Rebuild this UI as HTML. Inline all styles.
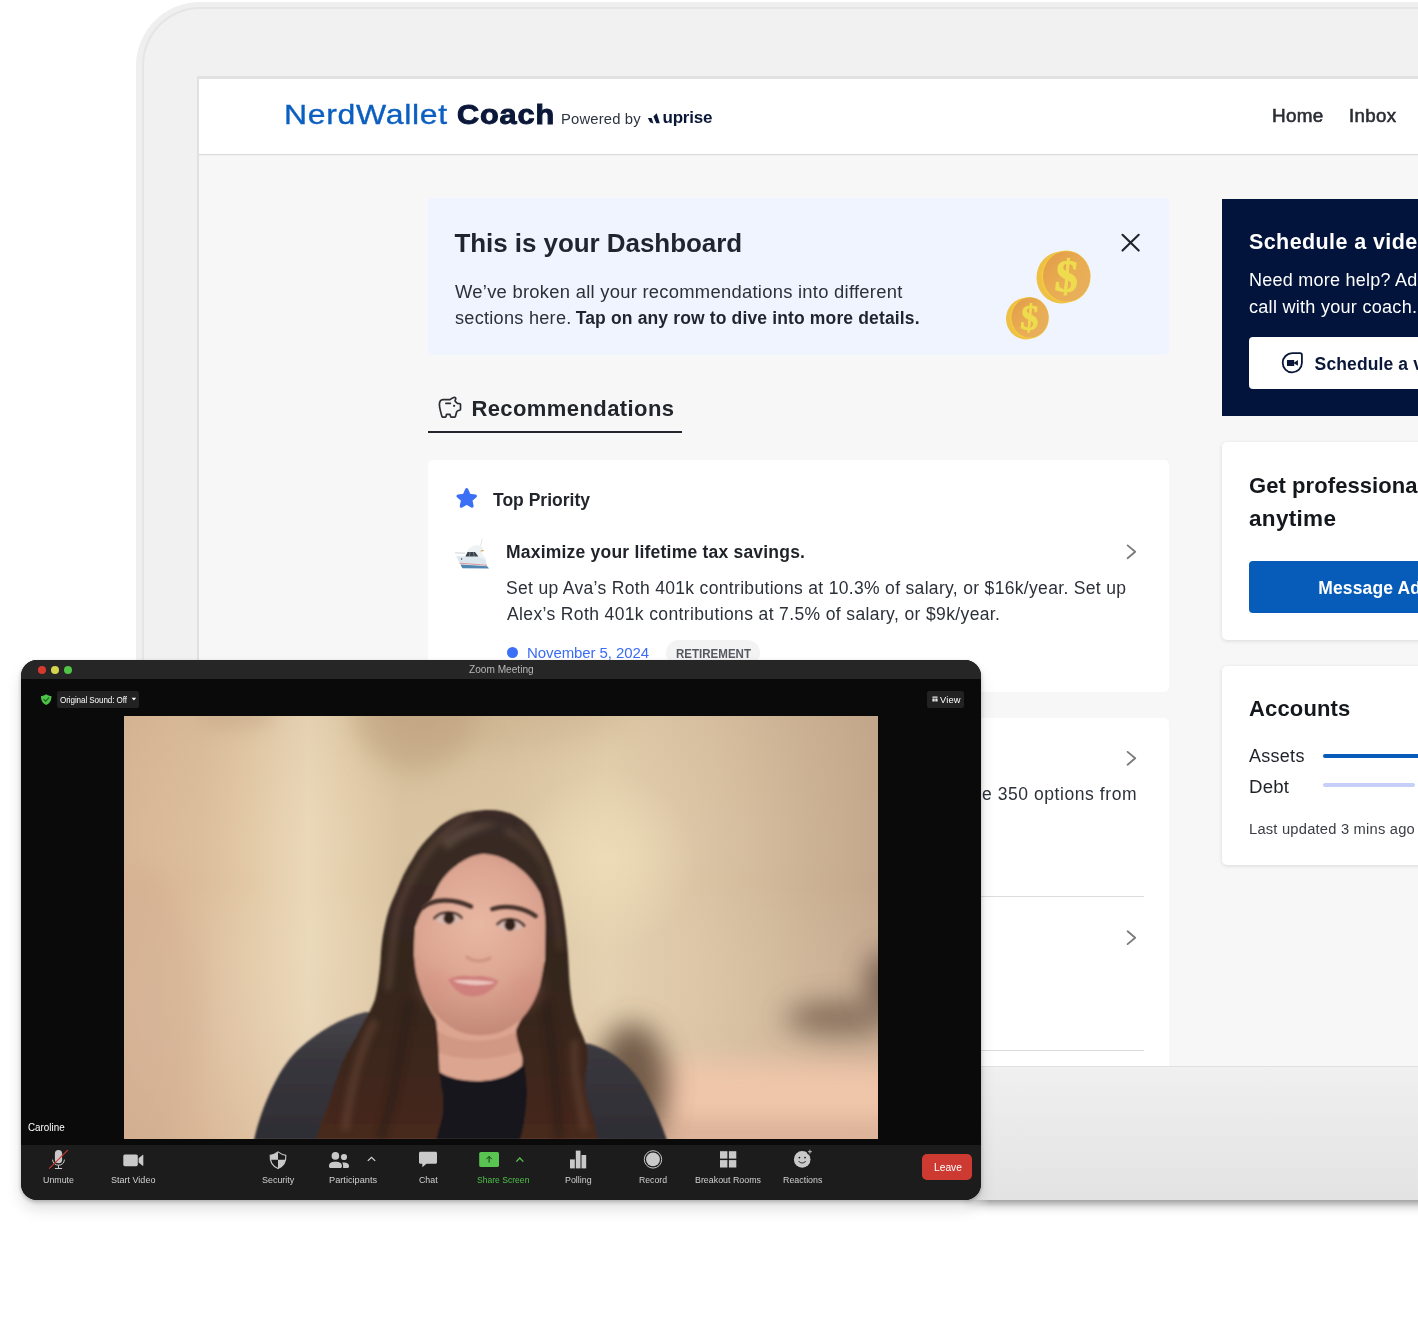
<!DOCTYPE html>
<html lang="en">
<head>
<meta charset="utf-8">
<title>NerdWallet Coach</title>
<style>
*{box-sizing:border-box;margin:0;padding:0}
html,body{width:1418px;height:1320px;overflow:hidden;background:#fff}
body{position:relative;font-family:"Liberation Sans",sans-serif}
.abs{position:absolute}
.tx{position:absolute;white-space:nowrap;line-height:1}
#laptop{position:absolute;left:136px;top:2.4px;width:1400px;height:1197.6px;border-radius:64px 0 0 0;background:#efefef}
#laptop-in{position:absolute;left:142.4px;top:7.4px;width:1400px;height:1192.6px;border-radius:58px 0 0 0;background:#e5e5e5}
#laptop-in2{position:absolute;left:144px;top:9px;width:1400px;height:1191px;border-radius:56.5px 0 0 0;background:linear-gradient(#f1f1f1 0,#f1f1f1 1057px,#efefef 1062px,#e3e3e3 1191px)}
#lapshadow{-webkit-mask-image:linear-gradient(to right,transparent,#000 28px);mask-image:linear-gradient(to right,transparent,#000 28px);position:absolute;left:962px;top:1200px;width:600px;height:16px;background:linear-gradient(rgba(0,0,0,.36),rgba(0,0,0,.26) 18%,rgba(0,0,0,.1) 45%,rgba(0,0,0,.03) 72%,rgba(0,0,0,0))}
#screen{position:absolute;left:197.3px;top:76.3px;width:1300px;height:991px;background:#e1e1e1;overflow:hidden}
#scr{position:absolute;left:1.7px;top:2.7px;width:1300px;height:987px;background:#f7f7f7;overflow:hidden}
#scr>.o{will-change:transform;position:absolute;left:-199px;top:-79px;width:1418px;height:1320px}
.card{position:absolute;background:#fff;border-radius:5px}
#zoom{position:absolute;left:21px;top:660px;width:960px;height:540px;border-radius:16px;background:#0a0a0a;overflow:hidden}
#zoom>.o{will-change:transform;position:absolute;left:-21px;top:-660px;width:1418px;height:1320px}
#zoomshadow{position:absolute;left:21px;top:660px;width:960px;height:540px;border-radius:16px;box-shadow:0 9px 15px rgba(0,0,0,.12),0 2px 4px rgba(0,0,0,.25)}
</style>
</head>
<body>
<div id="laptop"></div>
<div id="lapshadow"></div>
<div id="laptop-in"></div>
<div id="laptop-in2"></div>
<div id="screen"><div id="scr"><div class="o">
<!-- header -->
<div class="abs" style="left:199px;top:79px;width:1219px;height:74.8px;background:#fff;box-shadow:0 1.2px 0 #d9dbdb"></div>
<svg class="abs" style="left:646px;top:111px" width="16" height="14" viewBox="646 111 16 14"><path d="M647.9 118 L651.7 118 L653.4 123.4 L650 122.2 Z M656.7 113.2 L653.4 116.4 L656.3 123.2 L659.8 123.2 Z" fill="#0a1738"/></svg>

<!-- banner -->
<div class="abs" style="left:427.7px;top:198.4px;width:741.6px;height:157px;background:#f0f4fe;border-radius:3px"></div>
<svg class="abs" style="left:1000px;top:230px" width="150" height="115" viewBox="1000 230 150 115">
<defs>
<linearGradient id="cg" x1="0" y1="0" x2="1" y2="1"><stop offset="0" stop-color="#e29a48"/><stop offset=".5" stop-color="#e8ac52"/><stop offset="1" stop-color="#e8b060"/></linearGradient>
</defs>
<ellipse cx="1061.5" cy="277.5" rx="25" ry="26" fill="#efc046"/>
<ellipse cx="1066" cy="276.6" rx="24.6" ry="26" fill="#f2cb3e"/>
<ellipse cx="1066.6" cy="276.4" rx="23.6" ry="25.2" fill="url(#cg)"/>
<text x="1066.8" y="291.5" font-family="'Liberation Serif',serif" font-weight="700" font-size="46" fill="#efdc4e" stroke="#efdc4e" stroke-width=".9" text-anchor="middle" transform="rotate(5 1066 276)">$</text>
<ellipse cx="1025.8" cy="318.6" rx="19.8" ry="20.8" fill="#efc046"/>
<ellipse cx="1029.4" cy="317.8" rx="19.4" ry="20.8" fill="#f2cb3e"/>
<ellipse cx="1030" cy="317.6" rx="18.5" ry="20" fill="url(#cg)"/>
<text x="1029.8" y="329.6" font-family="'Liberation Serif',serif" font-weight="700" font-size="36" fill="#efdc4e" stroke="#efdc4e" stroke-width=".7" text-anchor="middle" transform="rotate(5 1030 318)">$</text>
<path d="M1122.5 234.8 L1138.7 250.6 M1138.7 234.8 L1122.5 250.6" stroke="#1f2228" stroke-width="2.1" stroke-linecap="round" fill="none"/>
</svg>

<!-- recommendations -->
<div class="abs" style="left:428px;top:431.3px;width:254px;height:2px;background:#23262c"></div>
<div class="card" style="left:427.7px;top:460px;width:741.7px;height:231.5px"></div>
<div class="card" style="left:427.7px;top:718.4px;width:741.7px;height:400px"></div>
<div class="abs" style="left:455px;top:896px;width:689px;height:1px;background:#dcdcdc"></div>
<div class="abs" style="left:455px;top:1050px;width:689px;height:1px;background:#dcdcdc"></div>
<svg class="abs" style="left:436px;top:394px" width="28" height="26" viewBox="436 394 28 26"><g fill="none" stroke="#2a2d33" stroke-width="1.7" stroke-linejoin="round" stroke-linecap="round">
<path d="M443 399.6 L450 399.6 C451.5 398.4 453 397.4 454.4 397.3 C455.6 397.3 455.9 398.2 455.7 399 C455.5 399.8 455.2 400.3 455 400.9 C455.8 402 456.6 402.8 457.6 403.4 L459.6 403.6 C460.2 403.6 460.5 404 460.5 404.5 L460.5 409.2 C460.5 409.8 460.1 410.1 459.6 410.2 L457.8 410.7 C457.2 411 456.9 411.3 456.7 411.8 L455.4 416.4 C455.2 417 454.9 417.2 454.3 417.2 L451.6 417.2 C451 417.2 450.8 417 450.6 416.4 L450 414.4 L446.5 414.4 L446 416.4 C445.8 417 445.5 417.2 445 417.2 L443 417.2 C442.4 417.2 442.1 417 441.9 416.4 L440.6 411.6 C439.8 408.6 439.3 406.4 439.4 404.2 C439.5 401.4 441 399.8 443 399.6 Z"/>
<path d="M445.9 403.3 L450.4 403.3"/></g><circle cx="454.1" cy="405.8" r="1.1" fill="#2a2d33"/></svg>
<svg class="abs" style="left:454px;top:485px" width="26" height="26" viewBox="454 485 26 26"><path d="M466.70 489.70 L469.23 495.32 L475.35 495.99 L470.79 500.13 L472.05 506.16 L466.70 503.10 L461.35 506.16 L462.61 500.13 L458.05 495.99 L464.17 495.32 Z" fill="#3b6ff6" stroke="#3b6ff6" stroke-width="3.2" stroke-linejoin="round"/></svg>
<svg class="abs" style="left:452px;top:536px" width="40" height="36" viewBox="452 536 40 36">
<path d="M480.6 546 L482.2 538.5" stroke="#cfd4d8" stroke-width=".6" fill="none"/>
<path d="M455 552.8 L465 553.2" stroke="#d8dde0" stroke-width="1.2" fill="none"/>
<path d="M456.3 556.3 L485 557.5 L487 566.6 L461.8 566.8 Z" fill="#e3ebf0"/>
<path d="M460.5 564.6 L487.2 566.3 L489 568.4 L462.3 568.2 Z" fill="#4f86b2"/>

<path d="M456.3 556.3 L485 557.5 L487 565.6 L460.2 564 Z" fill="#dde7ee"/><path d="M459.6 563.2 L487 565.3" stroke="#d8767c" stroke-width=".7" fill="none"/>
<path d="M464.6 557 L467.6 550.4 C469.5 547.2 472.6 545.8 476 545.3 L479 545.2 C481 546 482.6 547.4 483.8 549 L480.8 551 L486 560.5 L479 557 Z" fill="#eef2f4"/>
<path d="M465.4 556.4 L467.6 552 L475 552 L478.4 556.6 Z" fill="#39404a"/><path d="M470 552 L469.4 556.5 M473.4 552 L474.2 556.6" stroke="#aeb8c0" stroke-width=".5" fill="none"/>
<path d="M480.5 550.6 L483.6 550.2 L483.8 551 L481 551.4 Z" fill="#b8901c"/>
<circle cx="461.6" cy="559" r=".7" fill="#39414a"/>
</svg>
<svg class="abs" style="left:1122px;top:540px" width="20" height="410" viewBox="1122 540 20 410"><g fill="none" stroke="#7a7a7a" stroke-width="1.8" stroke-linecap="round" stroke-linejoin="round">
<path d="M1127.6 545.4 L1135.2 551.8 L1127.6 558.2"/><path d="M1127.6 751.9 L1135.2 758.3 L1127.6 764.7"/><path d="M1127.6 931.3 L1135.2 937.7 L1127.6 944.1"/></g></svg>
<div class="abs" style="left:507px;top:646.5px;width:11px;height:11px;border-radius:50%;background:#3b6ff6"></div>
<div class="abs" style="left:666px;top:640px;width:94px;height:26px;border-radius:13px;background:#f3f3f3"></div>

<!-- sidebar -->
<div class="abs" style="left:1222.4px;top:198.5px;width:300px;height:217.3px;background:#02143b"></div>
<div class="abs" style="left:1249px;top:337px;width:300px;height:52px;background:#fff;border-radius:4px"></div>
<div class="card" style="left:1222.4px;top:441.8px;width:300px;height:198.4px;box-shadow:0 1px 4px rgba(0,0,0,.12)"></div>
<div class="abs" style="left:1249px;top:560.8px;width:300px;height:52.2px;background:#065cb8;border-radius:4px"></div>
<div class="card" style="left:1222.4px;top:665.8px;width:300px;height:199.6px;box-shadow:0 1px 4px rgba(0,0,0,.12)"></div>
<div class="abs" style="left:1323px;top:754px;width:200px;height:4px;background:#065cb8;border-radius:2px"></div>
<div class="abs" style="left:1323px;top:783px;width:92px;height:4px;background:#c5cff8;border-radius:2px"></div>
<svg class="abs" style="left:1279px;top:350px" width="26" height="26" viewBox="1279 350 26 26"><path d="M1292.3 353.2 L1300 353.2 C1301.2 353.2 1301.9 353.9 1301.9 355.1 L1301.9 363 A9.6 9.6 0 1 1 1292.3 353.2 Z" fill="none" stroke="#0a1738" stroke-width="1.8"/><path d="M1287 360 L1294.2 360 L1294.2 362.4 L1297.9 360.1 L1297.9 365.8 L1294.2 363.5 L1294.2 365.9 L1287 365.9 Z" fill="#0a1738"/></svg>

<span class="tx" style="left:284.2px;top:101.0px;font-size:28px;font-weight:400;color:#0b5fc0;-webkit-text-stroke:0.35px #0b5fc0;letter-spacing:0.6px;transform-origin:0 0;transform:scaleX(1.1418);">NerdWallet</span>
<span class="tx" style="left:457.4px;top:101.0px;font-size:28px;font-weight:700;color:#0a1738;-webkit-text-stroke:1px #0a1738;letter-spacing:0.8px;transform-origin:0 0;transform:scaleX(1.0940);">Coach</span>
<span class="tx" style="left:561.0px;top:112.0px;font-size:14px;font-weight:400;color:#2c3340;letter-spacing:0.15px;transform-origin:0 0;transform:scaleX(1.0572);">Powered by</span>
<span class="tx" style="left:662.5px;top:109.0px;font-size:17px;font-weight:700;color:#0a1738;letter-spacing:-0.206px;">uprise</span>
<span class="tx" style="left:1271.6px;top:108.0px;font-size:17.5px;font-weight:400;color:#2a2d33;-webkit-text-stroke:0.55px #2a2d33;letter-spacing:0.3px;transform-origin:0 0;transform:scaleX(1.0796);">Home</span>
<span class="tx" style="left:1349.0px;top:108.0px;font-size:17.5px;font-weight:400;color:#2a2d33;-webkit-text-stroke:0.55px #2a2d33;letter-spacing:0.3px;transform-origin:0 0;transform:scaleX(1.0674);">Inbox</span>
<span class="tx" style="left:454.4px;top:230.0px;font-size:26px;font-weight:700;color:#1f2430;letter-spacing:-0.055px;">This is your Dashboard</span>
<span class="tx" style="left:454.7px;top:284.0px;font-size:17.5px;font-weight:400;color:#2c3038;letter-spacing:0.25px;transform-origin:0 0;transform:scaleX(1.0512);">We’ve broken all your recommendations into different</span>
<span class="tx" style="left:454.7px;top:310.0px;font-size:17.5px;font-weight:400;color:#2c3038;letter-spacing:0.25px;transform-origin:0 0;transform:scaleX(1.0364);">sections here.</span>
<span class="tx" style="left:575.7px;top:310.0px;font-size:17.5px;font-weight:700;color:#1f2430;letter-spacing:0.146px;">Tap on any row to dive into more details.</span>
<span class="tx" style="left:471.4px;top:398.0px;font-size:22px;font-weight:700;color:#22252b;letter-spacing:0.412px;">Recommendations</span>
<span class="tx" style="left:493.0px;top:492.0px;font-size:17.5px;font-weight:700;color:#22252b;letter-spacing:0.009px;">Top Priority</span>
<span class="tx" style="left:506.0px;top:544.0px;font-size:17.5px;font-weight:700;color:#1f2228;letter-spacing:0.212px;">Maximize your lifetime tax savings.</span>
<span class="tx" style="left:506.0px;top:580.0px;font-size:17.5px;font-weight:400;color:#2c3038;letter-spacing:0.324px;">Set up Ava’s Roth 401k contributions at 10.3% of salary, or $16k/year. Set up</span>
<span class="tx" style="left:507.0px;top:606.0px;font-size:17.5px;font-weight:400;color:#2c3038;letter-spacing:0.374px;">Alex’s Roth 401k contributions at 7.5% of salary, or $9k/year.</span>
<span class="tx" style="left:527.0px;top:645.0px;font-size:15px;font-weight:400;color:#3b6cf6;letter-spacing:-0.094px;">November 5, 2024</span>
<span class="tx" style="left:676.0px;top:648.0px;font-size:12px;font-weight:700;color:#565960;letter-spacing:0.0px;transform-origin:0 0;transform:scaleX(0.9615);">RETIREMENT</span>
<span class="tx" style="left:982.0px;top:786.0px;font-size:17.5px;font-weight:400;color:#2c3038;letter-spacing:0.562px;">e 350 options from</span>
<span class="tx" style="left:934.0px;top:786.0px;font-size:17.5px;font-weight:400;color:#2c3038;letter-spacing:-0.748px;">Choos</span>
<span class="tx" style="left:1249.0px;top:232.0px;font-size:21.5px;font-weight:700;color:#ffffff;letter-spacing:0.406px;">Schedule a video call</span>
<span class="tx" style="left:1249.0px;top:272.0px;font-size:17.5px;font-weight:400;color:#ffffff;letter-spacing:0.25px;transform-origin:0 0;transform:scaleX(1.0276);">Need more help? Add a video</span>
<span class="tx" style="left:1249.0px;top:299.0px;font-size:17.5px;font-weight:400;color:#ffffff;letter-spacing:0.25px;transform-origin:0 0;transform:scaleX(1.0333);">call with your coach.</span>
<span class="tx" style="left:1314.6px;top:356.0px;font-size:17.5px;font-weight:700;color:#0a1738;letter-spacing:0.122px;">Schedule a video call</span>
<span class="tx" style="left:1249.0px;top:475.0px;font-size:22px;font-weight:700;color:#14171c;letter-spacing:0.074px;">Get professional help</span>
<span class="tx" style="left:1249.0px;top:508.0px;font-size:22px;font-weight:700;color:#14171c;letter-spacing:0.3px;transform-origin:0 0;transform:scaleX(1.0240);">anytime</span>
<span class="tx" style="left:1318.3px;top:580.0px;font-size:17.5px;font-weight:700;color:#ffffff;letter-spacing:0.122px;">Message Advisor</span>
<span class="tx" style="left:1249.0px;top:698.0px;font-size:22px;font-weight:700;color:#14171c;letter-spacing:0.150px;">Accounts</span>
<span class="tx" style="left:1249.0px;top:747.0px;font-size:18px;font-weight:400;color:#1f2228;letter-spacing:0.274px;">Assets</span>
<span class="tx" style="left:1249.0px;top:778.0px;font-size:18px;font-weight:400;color:#1f2228;letter-spacing:0.2px;transform-origin:0 0;transform:scaleX(1.0352);">Debt</span>
<span class="tx" style="left:1249.0px;top:822.0px;font-size:14px;font-weight:400;color:#3a3d44;letter-spacing:0.2px;transform-origin:0 0;transform:scaleX(1.0510);">Last updated 3 mins ago</span>
</div></div></div>
<div id="zoomshadow"></div>
<div id="zoom"><div class="o">
<div class="abs" style="left:21px;top:660px;width:960px;height:19px;background:#262626"></div>
<div class="abs" style="left:21px;top:1145px;width:960px;height:55px;background:#1c1c1c"></div>
<svg class="abs" style="left:124px;top:716px" width="754" height="423" viewBox="124 716 754 423">
<defs>
<linearGradient id="bgh" x1="124" x2="878" y1="0" y2="0" gradientUnits="userSpaceOnUse">
<stop offset="0" stop-color="#d7b695"/><stop offset=".1" stop-color="#dcbd9b"/><stop offset=".17" stop-color="#e3caa7"/><stop offset=".245" stop-color="#ead8b8"/><stop offset=".3" stop-color="#e4cfac"/><stop offset=".37" stop-color="#d9c3a0"/><stop offset=".5" stop-color="#dac5a2"/><stop offset=".64" stop-color="#e3d0ad"/><stop offset=".78" stop-color="#d9c2a2"/><stop offset=".9" stop-color="#cdb395"/><stop offset="1" stop-color="#c3a78c"/>
</linearGradient>
<linearGradient id="bgv" x1="0" x2="0" y1="716" y2="1139" gradientUnits="userSpaceOnUse">
<stop offset="0" stop-color="#b89a7c" stop-opacity=".12"/><stop offset=".18" stop-color="#c8ac8c" stop-opacity=".04"/><stop offset=".4" stop-color="#fff" stop-opacity="0"/><stop offset="1" stop-color="#d0a68c" stop-opacity=".25"/>
</linearGradient>
<radialGradient id="spot" cx="606" cy="860" r="90" gradientUnits="userSpaceOnUse"><stop offset="0" stop-color="#eedcb8" stop-opacity=".95"/><stop offset="1" stop-color="#eedcb8" stop-opacity="0"/></radialGradient>
<radialGradient id="face" cx="478" cy="925" r="108" gradientUnits="userSpaceOnUse"><stop offset="0" stop-color="#e8b8a2"/><stop offset=".55" stop-color="#dca592"/><stop offset="1" stop-color="#c58a78"/></radialGradient>
<linearGradient id="hair" x1="0" x2="0" y1="810" y2="1139" gradientUnits="userSpaceOnUse"><stop offset="0" stop-color="#3a2c26"/><stop offset=".5" stop-color="#35251e"/><stop offset=".8" stop-color="#3e281e"/><stop offset="1" stop-color="#48291c"/></linearGradient>
<linearGradient id="shirt" x1="0" x2="0" y1="1012" y2="1139" gradientUnits="userSpaceOnUse"><stop offset="0" stop-color="#48464c"/><stop offset=".35" stop-color="#38373d"/><stop offset="1" stop-color="#2e2d34"/></linearGradient>
<filter id="bl1" filterUnits="userSpaceOnUse" x="100" y="700" width="800" height="460"><feGaussianBlur stdDeviation="1"/></filter>
<filter id="bl3" filterUnits="userSpaceOnUse" x="100" y="700" width="800" height="460"><feGaussianBlur stdDeviation="3"/></filter>
<filter id="bl8" filterUnits="userSpaceOnUse" x="100" y="700" width="800" height="460"><feGaussianBlur stdDeviation="9"/></filter>
<filter id="bl14" filterUnits="userSpaceOnUse" x="100" y="700" width="800" height="460"><feGaussianBlur stdDeviation="14"/></filter>
</defs>
<rect x="124" y="716" width="754" height="423" fill="url(#bgh)"/>
<rect x="124" y="716" width="754" height="423" fill="url(#bgv)"/>
<rect x="124" y="716" width="754" height="423" fill="url(#spot)"/>
<ellipse cx="415" cy="710" rx="62" ry="62" fill="#b89a76" filter="url(#bl14)" opacity=".5"/><ellipse cx="500" cy="712" rx="130" ry="36" fill="#bfa07e" filter="url(#bl14)" opacity=".28"/><ellipse cx="235" cy="716" rx="40" ry="14" fill="#c4a686" filter="url(#bl8)" opacity=".5"/>
<!-- pink floor bottom right -->
<rect x="640" y="1062" width="260" height="100" fill="#f0c6aa" filter="url(#bl14)"/>
<rect x="600" y="1118" width="300" height="40" fill="#d9b096" filter="url(#bl8)" opacity=".8"/>
<!-- dark blobs -->
<ellipse cx="632" cy="1085" rx="36" ry="62" fill="#5e4838" filter="url(#bl14)" opacity=".85"/>
<ellipse cx="835" cy="1018" rx="50" ry="16" fill="#6e5a4a" filter="url(#bl14)" opacity=".8"/>
<ellipse cx="884" cy="985" rx="18" ry="34" fill="#5e4a3c" filter="url(#bl14)" opacity=".8"/>
<!-- left soft shade -->
<ellipse cx="140" cy="1020" rx="60" ry="150" fill="#cfa88c" filter="url(#bl14)" opacity=".35"/>
<ellipse cx="400" cy="1035" rx="18" ry="22" fill="#c9ac8c" filter="url(#bl8)" opacity=".6"/>
<!-- shirt -->
<g filter="url(#bl1)">
<path d="M254 1140 C262 1105 280 1065 300 1048 C318 1032 340 1018 366 1012 L590 1044 C612 1050 632 1066 644 1088 C656 1110 662 1126 667 1140 Z" fill="url(#shirt)"/>
<path d="M416 1140 L426 1064 L528 1064 L540 1140 Z" fill="#19181d"/>
<!-- neck -->
<path d="M430 1010 L432 1066 C450 1086 502 1086 522 1066 L526 1010 Z" fill="#dca590"/>
<path d="M430 1026 C455 1046 498 1046 526 1026 L526 1048 C498 1062 452 1062 430 1048 Z" fill="#c98f7c" opacity=".6"/>
<!-- hair -->
<path d="M480.5 810.5 C494 809 506 811 514.4 815.3 C525 821 532 828 537 836.4 C546 850 551 862 553.9 873 C559 888 562 902 563.8 915.4 C566 930 567 942 568 955 C569 968 569 982 570.8 994.4 C572 1006 575 1018 579.3 1028 C583 1036 586 1043 587.7 1050.8 C589 1062 585 1072 585 1084.6 C585 1096 590 1108 593.4 1118.5 L598 1140 L520 1140 C528 1112 529 1085 523 1060 C520 1048 516 1040 516 1030 C520 1020 526 1012 531 1003 L545 960 L540 893 L514 864 L483 854 L458 864 L432 898 L415 927 L414 955 L420 986 C424 1000 430 1010 436 1020 C440 1050 438 1070 442 1090 C446 1110 440 1125 436 1140 L316 1140 C320 1125 324 1115 328 1104.4 C333 1090 337 1076 342.3 1062 C348 1050 355 1040 360.6 1028 C366 1018 371 1010 374.8 1000 C378 988 379 976 380.4 963.4 C381 950 382 938 384.6 926.7 C387 914 391 903 396 892.8 C401 880 406 869 412.8 859 C418 849 425 841 432.6 833.6 C439 826 447 821 455 816.7 C463 813 472 811 480.5 810.5 Z" fill="url(#hair)"/>
<!-- face -->
<path d="M432.6 898.5 C438 884 446 872 458 864.6 C466 858 475 854.5 483.4 854 C494 854 505 858 514.4 864.6 C526 872 534 882 539.8 892.8 C544 903 545.4 915 545.4 926.7 L544.9 955 C544 966 542 976 539.8 986 C536 997 532 1006 525.7 1014 C519 1022 511 1027 503 1031 C496 1034 488 1035.3 480.5 1035.3 C473 1035.3 465 1034 458 1031 C450 1027 442 1021 435.4 1014 C428 1006 423 996 419.9 986 C416 976 414.5 966 414.2 955 C414 945 414.5 936 415.7 926.7 C418 916 424 907 432.6 898.5 Z" fill="url(#face)"/>
</g>
<!-- hair highlights -->
<g filter="url(#bl3)" opacity=".6"><path d="M440 842 C455 826 478 820 500 824 C485 828 462 836 448 850 Z" fill="#6a5648"/><path d="M505 826 C522 832 536 848 542 866 C532 852 520 840 505 834 Z" fill="#5e4a3e"/></g>
<g filter="url(#bl3)" opacity=".55">
<path d="M470 815 C440 830 415 865 400 905 C392 930 392 960 388 990" stroke="#6a5040" stroke-width="6" fill="none"/>
<path d="M520 825 C545 850 556 900 560 950" stroke="#5a4436" stroke-width="5" fill="none"/>
<path d="M375 1020 C360 1050 350 1090 345 1130" stroke="#6a4a38" stroke-width="8" fill="none"/>
<path d="M575 1040 C572 1070 580 1100 585 1130" stroke="#6a4a38" stroke-width="7" fill="none"/>
<path d="M410 1000 C400 1050 395 1100 380 1138" stroke="#2a1c16" stroke-width="10" fill="none"/>
<path d="M545 1000 C555 1050 555 1100 560 1138" stroke="#2a1c16" stroke-width="10" fill="none"/>
</g>
<!-- features -->
<g filter="url(#bl1)">
<path d="M423 907 C433 899.5 452 897.5 471 906.5" stroke="#45302a" stroke-width="4.4" fill="none" stroke-linecap="round"/>
<path d="M492.5 909 C506 904.5 524 907.5 535.5 916" stroke="#45302a" stroke-width="4.4" fill="none" stroke-linecap="round"/>
<ellipse cx="447.8" cy="918.5" rx="12.5" ry="5.6" fill="#d9bab0"/>
<ellipse cx="510.5" cy="925" rx="12.5" ry="5.6" fill="#d9bab0"/>
<circle cx="449" cy="918.4" r="5.6" fill="#33201a"/>
<circle cx="510" cy="925" r="5.6" fill="#33201a"/>
<path d="M434 919 C440 910.5 456 910.5 462 918.5" stroke="#2a1a16" stroke-width="2.2" fill="none"/>
<path d="M497 925 C503 917 518 917.5 524.5 926.5" stroke="#2a1a16" stroke-width="2.2" fill="none"/>
<path d="M467 957 C472 962 484 962 490 958" stroke="#c98e7c" stroke-width="3.5" fill="none" stroke-linecap="round" opacity=".7"/>
<path d="M448 979.5 C458 974.5 466 975.5 472 976.5 C480 975 490 976.5 498.5 981 C493 992 481 997 472 996.5 C461 996 453 989 448 979.5 Z" fill="#cf807c"/>
<path d="M453 980.5 C466 979.5 484 980.5 495 982.5 C487 986 462 986 453 980.5 Z" fill="#ecc6c0"/>
</g>
<g filter="url(#bl8)" opacity=".5">
<ellipse cx="436" cy="985" rx="12" ry="14" fill="#d88c80"/>
<ellipse cx="524" cy="990" rx="12" ry="14" fill="#d88c80"/>
</g>
</svg>

<!-- traffic lights -->
<div class="abs" style="left:38px;top:665.7px;width:8.2px;height:8.2px;border-radius:50%;background:#d8392f"></div>
<div class="abs" style="left:50.8px;top:665.7px;width:8.2px;height:8.2px;border-radius:50%;background:#d6d44c"></div>
<div class="abs" style="left:63.7px;top:665.7px;width:8.2px;height:8.2px;border-radius:50%;background:#4fc446"></div>
<!-- top bar buttons -->
<div class="abs" style="left:57px;top:691px;width:82px;height:16.5px;border-radius:2.5px;background:#222"></div>
<div class="abs" style="left:927px;top:691px;width:37px;height:16.5px;border-radius:2.5px;background:#222"></div>
<svg class="abs" style="left:39px;top:692px" width="14" height="14" viewBox="39 692 14 14"><path d="M46.2 694.2 C47.8 695.4 49.6 695.9 51.4 696 C51.5 700.2 50 703.2 46.2 705 C42.4 703.2 40.9 700.2 41 696 C42.8 695.9 44.6 695.4 46.2 694.2 Z" fill="#4fc24a"/><path d="M43.8 699.4 L45.6 701.2 L48.8 697.9" stroke="#1d6a1f" stroke-width="1.3" fill="none" stroke-linecap="round" stroke-linejoin="round"/></svg>
<svg class="abs" style="left:130px;top:696px" width="8" height="6" viewBox="130 696 8 6"><path d="M131.6 697.8 L136.2 697.8 L133.9 700.4 Z" fill="#fff"/></svg>
<svg class="abs" style="left:931px;top:695px" width="8" height="8" viewBox="931 695 8 8"><path d="M932.4 696.4 H937.6 V697.8 H932.4 Z M932.4 698.5 H934.7 V701.4 H932.4 Z M935.3 698.5 H937.6 V701.4 H935.3 Z" fill="#e8e8e8"/></svg>
<!-- toolbar icons -->
<svg class="abs" style="left:40px;top:1147px" width="800" height="26" viewBox="40 1147 800 26">
<g fill="#c9c9c9">
<!-- mic -->
<rect x="54.9" y="1150.1" width="7.2" height="13.2" rx="3.6"/>
<path d="M52.6 1159.6 C52.6 1167 64.4 1167 64.4 1159.6" fill="none" stroke="#c9c9c9" stroke-width="1"/>
<path d="M58.5 1165.2 V1168.4 M54.9 1168.5 H62.1" fill="none" stroke="#c9c9c9" stroke-width="1"/>
<path d="M67.8 1150.1 L49.1 1168.7" stroke="#d0382e" stroke-width="1.1" fill="none"/>
<!-- video -->
<rect x="123.3" y="1154.4" width="14.5" height="11.8" rx="1.6"/>
<path d="M138.6 1158.3 L142.6 1154.9 C143 1154.6 143.3 1154.8 143.3 1155.2 V1165.4 C143.3 1165.8 143 1166 142.6 1165.7 L138.6 1162.6 Z"/>
<!-- security -->
<path d="M278 1151.9 C280.6 1153.9 283.4 1154.9 285.8 1155.2 C286.3 1161.4 283.6 1166 278 1168.6 C272.4 1166 269.7 1161.4 270.2 1155.2 C272.6 1154.9 275.4 1153.9 278 1151.9 Z" fill="none" stroke="#c9c9c9" stroke-width="1.1"/>
<path d="M278 1151.9 C275.4 1153.9 272.6 1154.9 270.2 1155.2 C270.1 1156.8 270.2 1158.4 270.5 1159.8 H278 Z"/>
<path d="M278 1159.8 H285.5 C284.7 1163.8 282.2 1166.7 278 1168.6 Z"/>
<!-- participants -->
<circle cx="335.4" cy="1155.9" r="3.8"/>
<path d="M330.6 1167.9 C329.6 1167.9 329 1167.3 329 1166.4 V1165.6 C329 1163.2 331.4 1161.7 335.4 1161.7 C339.4 1161.7 341.9 1163.2 341.9 1165.6 V1166.4 C341.9 1167.3 341.3 1167.9 340.3 1167.9 Z"/>
<circle cx="344" cy="1157" r="3.1"/>
<path d="M343.1 1167.9 V1165.4 C343.1 1164.3 342.7 1163.4 342 1162.8 C342.6 1162.6 343.3 1162.5 344 1162.5 C347.2 1162.5 349 1163.8 349 1165.8 V1166.5 C349 1167.4 348.5 1167.9 347.6 1167.9 Z"/>
<path d="M367.8 1160.9 L371.5 1157.3 L375.2 1160.9" fill="none" stroke="#d0d0d0" stroke-width="1.3"/>
<!-- chat -->
<path d="M420.5 1151.7 H435.5 C436.4 1151.7 437 1152.3 437 1153.2 V1162.3 C437 1163.2 436.4 1163.8 435.5 1163.8 H426.4 L422.4 1167.2 L422.2 1163.8 H420.5 C419.6 1163.8 419 1163.2 419 1162.3 V1153.2 C419 1152.3 419.6 1151.7 420.5 1151.7 Z"/>
<!-- share -->
<rect x="479.2" y="1152" width="19.8" height="14.9" rx="1.6" fill="#5ac453"/>
<path d="M489.1 1162.6 V1156.6 M486.4 1159.2 L489.1 1156.4 L491.8 1159.2" fill="none" stroke="#163a16" stroke-width="1"/>
<path d="M516.3 1161.6 L519.8 1158 L523.3 1161.6" fill="none" stroke="#5ac453" stroke-width="1.3"/>
<!-- polling -->
<rect x="570" y="1159.4" width="4.8" height="9"/><rect x="575.8" y="1150.6" width="4.7" height="17.8"/><rect x="581.5" y="1155" width="4.7" height="13.4"/>
<!-- record -->
<circle cx="653" cy="1159.4" r="8.7" fill="none" stroke="#c9c9c9" stroke-width="1"/><circle cx="653" cy="1159.4" r="6.9"/>
<!-- breakout -->
<rect x="720" y="1151.2" width="7.4" height="7.4"/><rect x="728.9" y="1151.2" width="7.4" height="7.4"/><rect x="720" y="1160.1" width="7.4" height="7.4"/><rect x="728.9" y="1160.1" width="7.4" height="7.4"/>
<!-- reactions -->
<circle cx="802.2" cy="1159.4" r="8.3"/>
<circle cx="799.4" cy="1157.6" r=".9" fill="#1c1c1c"/><circle cx="805" cy="1157.6" r=".9" fill="#1c1c1c"/>
<path d="M798.6 1161 C800.2 1163.6 804.2 1163.6 805.8 1161" fill="none" stroke="#1c1c1c" stroke-width=".9"/>
<circle cx="809.9" cy="1151.7" r="3" fill="#1c1c1c"/>
<path d="M809.9 1149.7 V1153.7 M807.9 1151.7 H811.9" fill="none" stroke="#c9c9c9" stroke-width=".9"/>
</g></svg>
<div class="abs" style="left:922.4px;top:1154.2px;width:50.1px;height:25.4px;border-radius:5px;background:#cd3a32"></div>

<span class="tx" style="left:468.6px;top:664.0px;font-size:10.5px;font-weight:400;color:#b8b8b8;letter-spacing:0.0px;transform-origin:0 0;transform:scaleX(0.9639);">Zoom Meeting</span>
<span class="tx" style="left:60.0px;top:696.0px;font-size:9.3px;font-weight:400;color:#ffffff;letter-spacing:-0.1px;transform-origin:0 0;transform:scaleX(0.8688);">Original Sound: Off</span>
<span class="tx" style="left:940.0px;top:696.0px;font-size:9.3px;font-weight:400;color:#ffffff;letter-spacing:0.172px;">View</span>
<span class="tx" style="left:28.0px;top:1122.0px;font-size:10.5px;font-weight:400;color:#ffffff;letter-spacing:0.0px;transform-origin:0 0;transform:scaleX(0.9358);">Caroline</span>
<span class="tx" style="left:42.6px;top:1175.0px;font-size:9.5px;font-weight:400;color:#d0d0d0;letter-spacing:0.0px;transform-origin:0 0;transform:scaleX(0.9319);">Unmute</span>
<span class="tx" style="left:111.0px;top:1175.0px;font-size:9.5px;font-weight:400;color:#d0d0d0;letter-spacing:0.0px;transform-origin:0 0;transform:scaleX(0.9481);">Start Video</span>
<span class="tx" style="left:261.7px;top:1175.0px;font-size:9.5px;font-weight:400;color:#d0d0d0;letter-spacing:0.0px;transform-origin:0 0;transform:scaleX(0.9409);">Security</span>
<span class="tx" style="left:328.9px;top:1175.0px;font-size:9.5px;font-weight:400;color:#d0d0d0;letter-spacing:0.0px;transform-origin:0 0;transform:scaleX(0.9690);">Participants</span>
<span class="tx" style="left:418.6px;top:1175.0px;font-size:9.5px;font-weight:400;color:#d0d0d0;letter-spacing:0.0px;transform-origin:0 0;transform:scaleX(0.9264);">Chat</span>
<span class="tx" style="left:476.6px;top:1175.0px;font-size:9.5px;font-weight:400;color:#4fc04a;letter-spacing:0.0px;transform-origin:0 0;transform:scaleX(0.9020);">Share Screen</span>
<span class="tx" style="left:564.6px;top:1175.0px;font-size:9.5px;font-weight:400;color:#d0d0d0;letter-spacing:0.0px;transform-origin:0 0;transform:scaleX(0.9358);">Polling</span>
<span class="tx" style="left:639.0px;top:1175.0px;font-size:9.5px;font-weight:400;color:#d0d0d0;letter-spacing:0.0px;transform-origin:0 0;transform:scaleX(0.9143);">Record</span>
<span class="tx" style="left:695.0px;top:1175.0px;font-size:9.5px;font-weight:400;color:#d0d0d0;letter-spacing:0.0px;transform-origin:0 0;transform:scaleX(0.9327);">Breakout Rooms</span>
<span class="tx" style="left:783.4px;top:1175.0px;font-size:9.5px;font-weight:400;color:#d0d0d0;letter-spacing:0.0px;transform-origin:0 0;transform:scaleX(0.9325);">Reactions</span>
<span class="tx" style="left:933.8px;top:1162.0px;font-size:11.2px;font-weight:400;color:#ffffff;letter-spacing:0.0px;transform-origin:0 0;transform:scaleX(0.9152);">Leave</span>
</div></div>
</body>
</html>
